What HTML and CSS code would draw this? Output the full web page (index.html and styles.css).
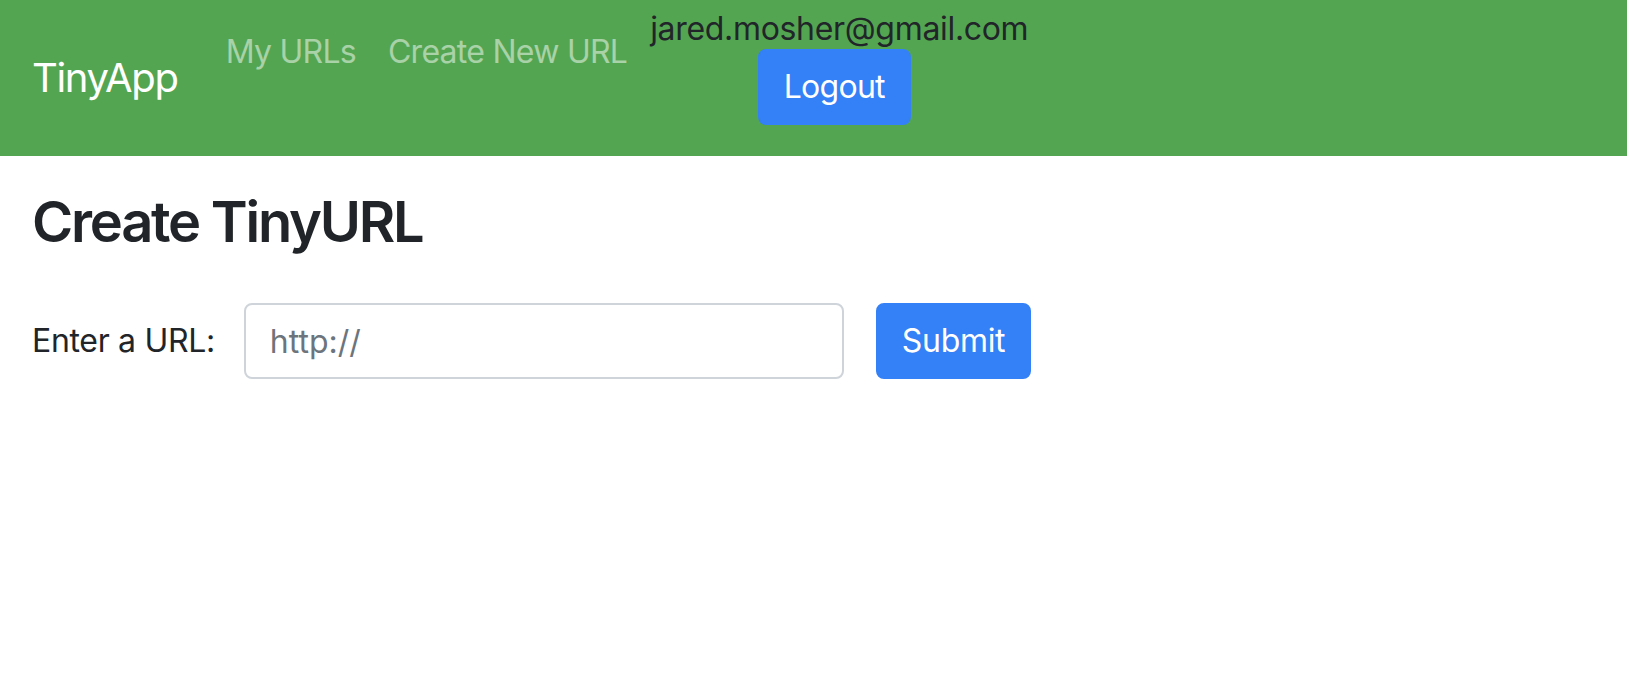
FILE: index.html
```html
<!DOCTYPE html>
<html lang="en">
<head>
<meta charset="utf-8">
<title>TinyApp</title>
<link rel="stylesheet" href="styles.css">
</head>
<body>
<nav class="navbar">
  <a class="brand" href="#">TinyApp</a>
  <ul class="nav">
    <li><a class="nav-link" href="#">My URLs</a></li>
    <li><a class="nav-link" href="#">Create New URL</a></li>
  </ul>
  <div class="user">
    <div class="email">jared.mosher@gmail.com</div>
    <form class="logout-form">
      <button type="button" class="btn btn-logout">Logout</button>
    </form>
  </div>
</nav>
<main class="main">
  <h3 class="title">Create TinyURL</h3>
  <form class="url-form">
    <label class="url-label" for="longURL">Enter a URL:</label>
    <input class="url-input" id="longURL" type="text" placeholder="http://">
    <button type="button" class="btn btn-submit">Submit</button>
  </form>
</main>
</body>
</html>
```

FILE: styles.css
```css
* { box-sizing: border-box; }
html, body { margin: 0; padding: 0; }
body {
  font-family: Inter, "Noto Sans", "Liberation Sans", sans-serif;
  font-size: 32px;
  line-height: 1.5;
  color: #212529;
  background: #fff;
}
.navbar {
  display: flex;
  align-items: flex-start;
  height: 156px;
  padding: 0 32px;
  background: #53a551;
}
.brand {
  align-self: center;
  font-size: 40px;
  line-height: 60px;
  letter-spacing: -0.033em;
  color: #fff;
  text-decoration: none;
  margin-right: 32px;
}
.nav {
  display: flex;
  list-style: none;
  margin: 12px 0 0;
  padding: 0;
}
.nav-link {
  display: block;
  padding: 16px 16px;
  line-height: 48px;
  letter-spacing: -0.023em;
  color: rgba(255, 255, 255, 0.5);
  text-decoration: none;
}
.user {
  display: flex;
  flex-direction: column;
  align-items: center;
  margin-top: 9px;
  margin-left: 7px;
}
.email {
  line-height: 40px;
  letter-spacing: -0.01em;
  color: #212529;
}
.logout-form { margin: 0 10px 0 0; }
.btn {
  font-family: inherit;
  font-size: 32px;
  line-height: 48px;
  padding: 12px 24px;
  border: 2px solid #3480f6;
  border-radius: 8px;
  background: #3480f6;
  color: #fff;
  cursor: pointer;
}
.btn-logout { letter-spacing: -0.022em; }
.btn-submit { letter-spacing: -0.01em; }
.main {
  padding: 33px 32px 0;
}
.title {
  margin: 0 0 47px;
  font-size: 56px;
  font-weight: 600;
  line-height: 1.2;
  letter-spacing: -0.04em;
}
.url-form {
  display: flex;
  align-items: center;
}
.url-label {
  margin-right: 29px;
  letter-spacing: -0.01em;
}
.url-input {
  width: 600px;
  height: 76px;
  padding: 12px 24px;
  font-family: inherit;
  font-size: 32px;
  line-height: 48px;
  color: #495057;
  border: 2px solid #ced4da;
  border-radius: 8px;
  margin-right: 32px;
}
.url-input::placeholder { color: #6c757d; }
```
